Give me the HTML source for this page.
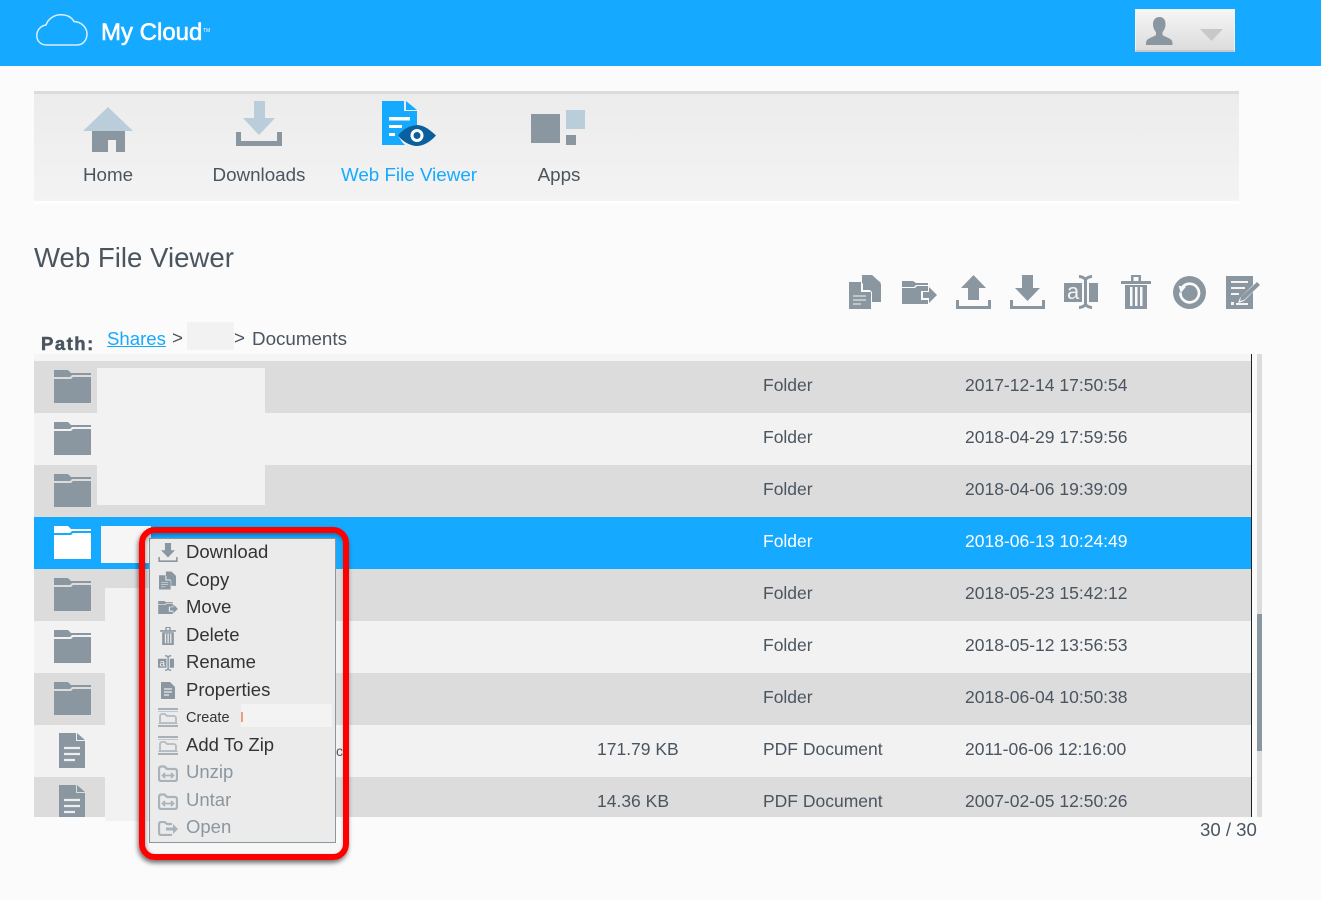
<!DOCTYPE html>
<html><head><meta charset="utf-8"><title>My Cloud</title>
<style>
html,body{margin:0;padding:0;width:1321px;height:900px;overflow:hidden;background:#fbfbfb;font-family:"Liberation Sans",Arial,sans-serif}
.a{position:absolute}
.t{position:absolute;white-space:nowrap;line-height:24px;height:24px;color:#4a5560}
.nav{font-size:18.800px;width:150px;text-align:center;top:163px;color:#4b5560}
.r{position:absolute;left:34px;width:1217px;height:52px}
.d{background:#dcdcdc}.l{background:#f2f2f2}
.c{font-size:17.500px}
.m{font-size:18.500px;left:186px;color:#333}
.g{color:#8a97a1}
svg{position:absolute;overflow:visible}
</style></head><body>
<svg width="0" height="0" style="position:absolute">
<defs>
<symbol id="copy" viewBox="0 0 32 34"><path fill="#8a97a1" d="M13 0h10l9 9v18H23V17L13 8z"/><path fill="#8a97a1" d="M23 0l9 8h-9z"/><path fill="#8a97a1" d="M0 7h12v10h10v17H0z"/><path fill="#8a97a1" d="M14 7l8 8h-8z"/><path fill="none" stroke="#f4f4f4" d="M4 21h13M4 25h13M4 29h8"/></symbol>
<symbol id="move" viewBox="0 0 35 23"><path fill="#8a97a1" d="M0 0h11l3 2h12v2H14l-2 2H0z"/><path fill="#8a97a1" d="M0 7h13l2-2h11v5h-7v9h7v4H0z"/><path fill="#8a97a1" d="M21 11h6V6l8 8-8 8v-5h-6z"/></symbol>
<symbol id="up" viewBox="0 0 35 34"><path fill="#8a97a1" d="M17.500 0L30 13h-7v12H12V13H5z"/><path fill="#8a97a1" d="M0 25h3v6h29v-6h3v9H0z"/></symbol>
<symbol id="down" viewBox="0 0 35 34"><path fill="#8a97a1" d="M12 0h11v13h7L17.500 26 5 13h7z"/><path fill="#8a97a1" d="M0 25h3v6h29v-6h3v9H0z"/></symbol>
<symbol id="ren" viewBox="0 0 34 34"><path fill="#8a97a1" d="M0 8h18v19H0zM25 8h9v19h-9z"/><path fill="none" stroke="#8a97a1" stroke-width="3" d="M15 1.500c2 0 5 1 6.500 3 1.500-2 4.500-3 6.500-3M21.500 4v26M15 32.500c2 0 5-1 6.500-3 1.500 2 4.500 3 6.500 3"/><text x="3" y="24" font-family="Liberation Sans,sans-serif" font-size="22" fill="#f4f4f4">a</text></symbol>
<symbol id="trash" viewBox="0 0 30 34"><path fill="#8a97a1" d="M0 6h10V0h10v6h10v3H0zM12.500 2v4h5V2z"/><path fill="#8a97a1" fill-rule="evenodd" d="M4 10h22v24H4zM9 12v19h2.500V12zM14 12v19h2.500V12zM19 12v19h2.500V12z"/></symbol>
<symbol id="rest" viewBox="0 0 32 32"><circle cx="16" cy="16" r="16" fill="#8a97a1"/><path fill="none" stroke="#fbfbfb" stroke-width="2.600" d="M9.500 10.500A9 9 0 1 1 7.200 16"/><path fill="#fbfbfb" d="M5.500 9.500l7 1-5 6z"/></symbol>
<symbol id="edit" viewBox="0 0 35 33"><path fill="#8a97a1" d="M0 0h27v9L14 22l-2 5 6-2 9-9v17H0z"/><path fill="#8a97a1" d="M15 21L31 6l3 3-16 15-4 1z"/><path fill="none" stroke="#f4f4f4" stroke-width="2" d="M5 6h17M5 12h14M5 18h8M10 28h12"/><rect x="5" y="26" width="3" height="3" fill="#f4f4f4"/></symbol>
<symbol id="prop" viewBox="0 0 14 17"><path fill="#8a97a1" d="M0 0h9l5 5v12H0z"/><path fill="none" stroke="#ebebeb" stroke-width="1.300" d="M3 7h8M3 10h8M3 13h5"/></symbol>
<symbol id="zip" viewBox="0 0 20 19"><rect width="20" height="2" fill="#a8b1b8"/><rect y="3" width="20" height="1" fill="#c2c9ce"/><rect y="15" width="20" height="1" fill="#c2c9ce"/><rect y="17" width="20" height="2" fill="#a8b1b8"/><path fill="#ebebeb" stroke="#b3bbc1" stroke-width="1.800" d="M2 15V8c0-1 1-2 2-2h3l2 2h7c1 0 2 1 2 2v5z"/></symbol>
<symbol id="unz" viewBox="0 0 20 17"><path fill="#ebebeb" stroke="#aab3ba" stroke-width="2.300" d="M3 16c-1 0-2-1-2-2V4c0-1.500 .8-2.500 2-2.500h3.500L9 4h8c1 0 2 1 2 2v8c0 1-1 2-2 2z"/><path fill="none" stroke="#aab3ba" stroke-width="1.700" d="M5 10.500h10M7 8l-2.500 2.500L7 13M13 8l2.500 2.500L13 13"/></symbol>
<symbol id="open" viewBox="0 0 20 15"><path fill="none" stroke="#aab3ba" stroke-width="2.300" d="M14 14H3c-1 0-2-1-2-2V3c0-1 .8-2 2-2h3.500L9 3h5"/><path fill="#aab3ba" d="M8 6.500h7V3l5 5-5 5V9.500H8z"/></symbol>
<symbol id="folder" viewBox="0 0 37 33"><path fill="#8a97a1" d="M0 0h14l3 3h20v2H18l-2 2H0z"/><path fill="#8a97a1" d="M0 9h17l2-2h18v26H0z"/></symbol>
<symbol id="folderw" viewBox="0 0 37 33"><path fill="#fff" d="M0 0h14l3 3h20v2H18l-2 2H0z"/><path fill="#fff" d="M0 9h17l2-2h18v26H0z"/></symbol>
<symbol id="file" viewBox="0 0 26 35"><path fill="#8a97a1" d="M0 0h17v8h9v27H0z"/><path fill="#8a97a1" d="M18 0l8 7h-8z"/><path fill="none" stroke="#eee" stroke-width="2.300" d="M5 15h16M5 21h16M5 27h11"/></symbol>
</defs></svg>

<div class="a" style="left:0;top:0;width:1321px;height:66px;background:#15aaff"></div>
<svg style="left:36px;top:14px" width="52" height="32" viewBox="0 0 52 32"><path fill="none" stroke="#d8f0ff" stroke-width="1.500" d="M11 31C4 31 .8 26.500.8 21.500.8 16 5 11.500 10 11 12 5 18 .8 25 .8c6 0 10.500 2.500 13 6.700C46 8 51 14 51 20c0 6-4 11-10 11z"/></svg>
<div class="t" style="left:101px;top:21px;font-size:24px;color:#fff;-webkit-text-stroke:.6px #fff">My Cloud</div>
<div class="t" style="left:203px;top:19px;font-size:5px;color:#fff">TM</div>

<div class="a" style="left:1135px;top:9px;width:98px;height:40px;border:1px solid #f3f3f3;border-bottom:2px solid #c8c8c8;background:linear-gradient(#f6f6f6,#dcdcdc)"></div>
<svg style="left:1146px;top:17px" width="27" height="28" viewBox="0 0 27 28"><path fill="#8a97a1" d="M13.500 0c4 0 6 3 6 7 0 3-1 6-3 8v3c3 2 7 3 9 5 1 1 1 3 1 5H0c0-2 0-4 1-5 2-2 6-3 9-5v-3c-2-2-3-5-3-8 0-4 2.500-7 6.500-7z"/></svg>
<svg style="left:1200px;top:29px" width="23" height="12"><path fill="#c8c8c8" d="M0 0h23L11.500 12z"/></svg>

<div class="a" style="left:34px;top:91px;width:1205px;height:110px;border-top:3px solid #dcdcdc;box-sizing:border-box;background:linear-gradient(#ececec,#f3f3f3)"></div>
<div class="a" style="left:34px;top:201px;width:1205px;height:3px;background:#fff"></div>

<svg style="left:83px;top:107px" width="50" height="45" viewBox="0 0 50 45"><path fill="#b9cddb" d="M25 0l25 24H0z"/><path fill="#8a97a1" d="M9 24h33v21H33V33h-8v12H9z"/></svg>
<svg style="left:236px;top:101px" width="46" height="45" viewBox="0 0 46 45"><path fill="#b9cddb" d="M18 0h11v17h10L23 34 7 17h11z"/><path fill="#8a97a1" d="M0 31h5v9h36v-9h5v14H0z"/></svg>
<svg style="left:382px;top:101px" width="55" height="46" viewBox="0 0 55 46"><path fill="#15aaff" d="M0 0h22v10h13v14c-7 0-14 5-19 10.500 2 3.500 4 7 7 9.500H0z"/><path fill="#15aaff" d="M24 0l11 9H24z"/><path fill="#fff" d="M7 16h21v3.500H7zM7 24h13v3H7zM7 32h6v3H7z"/><path fill="#0a5f9e" d="M16 34.500C20 29 28 24 35 24s13 5 19 10.500C49 40 42 45 35 45s-15-5-19-10.500z"/><circle cx="35" cy="34.500" r="6.500" fill="#fff"/><circle cx="35" cy="34.500" r="3.500" fill="#0a5f9e"/></svg>
<svg style="left:531px;top:110px" width="54" height="36" viewBox="0 0 54 36"><rect y="4" width="29" height="29" fill="#8a97a1"/><rect x="35" width="19" height="19" fill="#b9cddb"/><rect x="35" y="25" width="10" height="10" fill="#8a97a1"/></svg>

<div class="t nav" style="left:33px">Home</div>
<div class="t nav" style="left:184px">Downloads</div>
<div class="t nav" style="left:334px;color:#15aaff">Web File Viewer</div>
<div class="t nav" style="left:484px">Apps</div>

<div class="t" style="left:34px;top:246px;font-size:27.600px">Web File Viewer</div>

<svg style="left:849px;top:275px" width="32" height="34"><use href="#copy"/></svg>
<svg style="left:902px;top:281px" width="35" height="23"><use href="#move"/></svg>
<svg style="left:956px;top:275px" width="35" height="34"><use href="#up"/></svg>
<svg style="left:1010px;top:275px" width="35" height="34"><use href="#down"/></svg>
<svg style="left:1064px;top:275px" width="34" height="34"><use href="#ren"/></svg>
<svg style="left:1121px;top:275px" width="30" height="34"><use href="#trash"/></svg>
<svg style="left:1173px;top:276px" width="33" height="33"><use href="#rest"/></svg>
<svg style="left:1226px;top:276px" width="35" height="33"><use href="#edit"/></svg>

<div class="t" style="left:41px;top:332px;font-size:18.500px;font-weight:bold;letter-spacing:1.500px;-webkit-text-stroke:.5px #4a5560">Path:</div>
<div class="t" style="left:107px;top:327px;font-size:18.600px;color:#15aaff;text-decoration:underline">Shares</div>
<div class="t" style="left:172px;top:326px;font-size:18.800px">&gt;</div>
<div class="a" style="left:187px;top:322px;width:47px;height:28px;background:#f2f2f2"></div>
<div class="t" style="left:234px;top:326px;font-size:18.800px">&gt;</div>
<div class="t" style="left:252px;top:327px;font-size:18.800px">Documents</div>

<div class="a" style="left:34px;top:354px;width:1217px;height:463px;overflow:hidden;background:#f5f5f5">
<div class="r d" style="top:7px;left:0"></div>
<div class="r l" style="top:59px;left:0"></div>
<div class="r d" style="top:111px;left:0"></div>
<div class="r" style="top:163px;left:0;background:#15aaff"></div>
<div class="r d" style="top:215px;left:0"></div>
<div class="r l" style="top:267px;left:0"></div>
<div class="r d" style="top:319px;left:0"></div>
<div class="r l" style="top:371px;left:0"></div>
<div class="r d" style="top:423px;left:0"></div>
<svg style="left:25px;top:379px" width="26" height="35"><use href="#file"/></svg>
<svg style="left:25px;top:431px" width="26" height="35"><use href="#file"/></svg>
</div>

<svg style="left:54px;top:370px" width="37" height="33"><use href="#folder"/></svg>
<svg style="left:54px;top:422px" width="37" height="33"><use href="#folder"/></svg>
<svg style="left:54px;top:474px" width="37" height="33"><use href="#folder"/></svg>
<svg style="left:54px;top:526px" width="37" height="33"><use href="#folderw"/></svg>
<svg style="left:54px;top:578px" width="37" height="33"><use href="#folder"/></svg>
<svg style="left:54px;top:630px" width="37" height="33"><use href="#folder"/></svg>
<svg style="left:54px;top:682px" width="37" height="33"><use href="#folder"/></svg>

<div class="a" style="left:97px;top:368px;width:168px;height:137px;background:#f2f2f2"></div>
<div class="a" style="left:101px;top:526px;width:50px;height:37px;background:#f6f6f6"></div>
<div class="a" style="left:105px;top:588px;width:45px;height:233px;background:#f2f2f2"></div>
<div class="a" style="left:336px;top:735px;width:62px;height:30px;background:#f2f2f2"></div>
<div class="t" style="left:336px;top:739px;font-size:14px">c</div>

<div class="t c" style="left:763px;top:373px">Folder</div><div class="t c" style="left:965px;top:373px">2017-12-14 17:50:54</div>
<div class="t c" style="left:763px;top:425px">Folder</div><div class="t c" style="left:965px;top:425px">2018-04-29 17:59:56</div>
<div class="t c" style="left:763px;top:477px">Folder</div><div class="t c" style="left:965px;top:477px">2018-04-06 19:39:09</div>
<div class="t c" style="left:763px;top:529px;color:#fff">Folder</div><div class="t c" style="left:965px;top:529px;color:#fff">2018-06-13 10:24:49</div>
<div class="t c" style="left:763px;top:581px">Folder</div><div class="t c" style="left:965px;top:581px">2018-05-23 15:42:12</div>
<div class="t c" style="left:763px;top:633px">Folder</div><div class="t c" style="left:965px;top:633px">2018-05-12 13:56:53</div>
<div class="t c" style="left:763px;top:685px">Folder</div><div class="t c" style="left:965px;top:685px">2018-06-04 10:50:38</div>
<div class="t c" style="left:597px;top:737px">171.79 KB</div><div class="t c" style="left:763px;top:737px">PDF Document</div><div class="t c" style="left:965px;top:737px">2011-06-06 12:16:00</div>
<div class="t c" style="left:597px;top:789px">14.36 KB</div><div class="t c" style="left:763px;top:789px">PDF Document</div><div class="t c" style="left:965px;top:789px">2007-02-05 12:50:26</div>

<div class="a" style="left:1251px;top:354px;width:1px;height:463px;background:#222"></div>
<div class="a" style="left:1257px;top:354px;width:5px;height:463px;background:#dcdcdc"></div>
<div class="a" style="left:1257px;top:614px;width:5px;height:137px;background:#8a97a1"></div>
<div class="t" style="left:1200px;top:818px;font-size:18.600px">30 / 30</div>

<div class="a" style="left:142px;top:843px;width:200px;height:12px;background:#f7f7f7"></div>
<div class="a" style="left:149px;top:538px;width:185px;height:303px;background:#ebebeb;border:1.500px solid #8a979f"></div>
<div class="a" style="left:139px;top:527px;width:198px;height:321px;border:6px solid #f00;border-radius:16px;box-shadow:-1px 3px 5px rgba(0,0,0,.55),inset 1px 2px 4px rgba(0,0,0,.35)"></div>

<svg style="left:158px;top:543px" width="20" height="19" viewBox="0 0 35 34"><use href="#down" width="35" height="34"/></svg>
<svg style="left:159px;top:571px" width="17" height="19" viewBox="0 0 32 34"><use href="#copy" width="32" height="34"/></svg>
<svg style="left:158px;top:601px" width="20" height="13" viewBox="0 0 35 23"><use href="#move" width="35" height="23"/></svg>
<svg style="left:160px;top:627px" width="16" height="18" viewBox="0 0 30 34"><use href="#trash" width="30" height="34"/></svg>
<svg style="left:158px;top:654px" width="16" height="18" viewBox="0 0 34 34"><use href="#ren" width="34" height="34"/></svg>
<svg style="left:161px;top:682px" width="14" height="17"><use href="#prop"/></svg>
<svg style="left:158px;top:708px" width="20" height="19"><use href="#zip"/></svg>
<svg style="left:158px;top:736px" width="20" height="19"><use href="#zip"/></svg>
<svg style="left:158px;top:765px" width="20" height="17"><use href="#unz"/></svg>
<svg style="left:158px;top:793px" width="20" height="17"><use href="#unz"/></svg>
<svg style="left:158px;top:821px" width="20" height="15"><use href="#open"/></svg>

<div class="t m" style="top:540px">Download</div>
<div class="t m" style="top:568px">Copy</div>
<div class="t m" style="top:595px">Move</div>
<div class="t m" style="top:623px">Delete</div>
<div class="t m" style="top:650px">Rename</div>
<div class="t m" style="top:678px">Properties</div>
<div class="t" style="left:186px;top:706px;font-size:14.500px;color:#333">Create</div>
<div class="a" style="left:241px;top:704px;width:91px;height:23px;background:#f3f3f3"></div>
<div class="a" style="left:241px;top:712px;width:1.500px;height:10px;background:#e8a080"></div>
<div class="t m" style="top:733px">Add To Zip</div>
<div class="t m g" style="top:760px">Unzip</div>
<div class="t m g" style="top:788px">Untar</div>
<div class="t m g" style="top:815px">Open</div>
</body></html>
